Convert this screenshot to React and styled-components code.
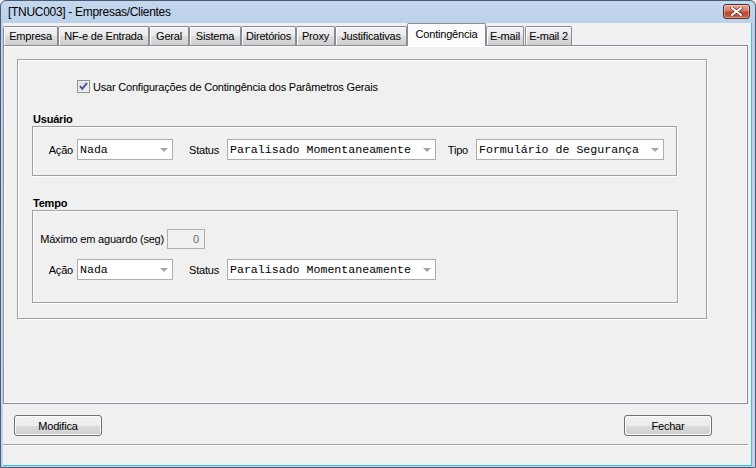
import React from 'react';
import styled, { createGlobalStyle } from 'styled-components';

const Global = createGlobalStyle`
  html, body {
    margin: 0;
    padding: 0;
    width: 756px;
    height: 468px;
    overflow: hidden;
    background: #f0f0f0;
  }
  body {
    font-family: "Liberation Sans", Arial, sans-serif;
    font-size: 11px;
    letter-spacing: -0.2px;
    color: #000;
  }
  * { box-sizing: border-box; }
`;

const Window = styled.div`
  width: 756px;
  height: 468px;
  display: flex;
  flex-direction: column;
  background: linear-gradient(#c3d7ed, #b9d0e9 30px, #c0d5ec);
  border: 1px solid #4a5d74;
  border-radius: 6px 6px 0 0;
  overflow: hidden;
`;

const TitleBar = styled.div`
  height: 22px;
  flex: none;
  display: flex;
  align-items: center;
  justify-content: space-between;
  padding: 0 5px 0 7px;
  font-size: 12px;
  letter-spacing: -0.3px;
  color: #000;
`;

const CloseButton = styled.div`
  width: 27px;
  height: 15px;
  margin-top: -1px;
  border: 1px solid #5a2a24;
  border-radius: 3px;
  background: linear-gradient(#e8a99c, #d27a68 45%, #c1442f 55%, #c9614c);
  display: flex;
  align-items: center;
  justify-content: center;
  box-shadow: inset 0 0 0 1px rgba(255, 255, 255, 0.35);
`;

const Client = styled.div`
  flex: 1;
  display: flex;
  flex-direction: column;
  margin: 0 3px 1px 2px;
  background: #f0f0f0;
  border-bottom: 1px solid #3fbfe8;
  border-right: 1px solid #3fbfe8;
`;

const TabStrip = styled.div`
  height: 22px;
  flex: none;
  display: flex;
  align-items: flex-end;
  position: relative;
  z-index: 1;
`;

const Tab = styled.div`
  width: ${(p) => p.$w}px;
  margin-left: ${(p) => p.$ml || 0}px;
  height: ${(p) => (p.$active ? 23 : 19)}px;
  margin-bottom: ${(p) => (p.$active ? -1 : 0)}px;
  display: flex;
  align-items: center;
  justify-content: center;
  padding-bottom: ${(p) => (p.$active ? 3 : 0)}px;
  border: 1px solid #898c95;
  border-bottom: none;
  border-radius: 2px 2px 0 0;
  background: ${(p) =>
    p.$active ? '#fcfcfc' : 'linear-gradient(#f2f2f2, #ebebeb 50%, #dddddd 51%, #cfcfcf)'};
  box-shadow: ${(p) => (p.$active ? 'none' : 'inset 1px 1px 0 #fff')};
  white-space: nowrap;
  font-size: 11px;
`;

const TabPanel = styled.div`
  height: 359px;
  flex: none;
  margin-right: 3px;
  border: 1px solid #898c95;
  background: #f0f0f0;
  box-shadow: inset 1px 1px 0 #fff, inset -1px -1px 0 #fff;
  padding: 13px 0 0 13px;
`;

const EtchedBox = styled.div`
  border: 1px solid #a0a0a0;
  box-shadow: inset 1px 1px 0 #fff, 1px 1px 0 #fff;
`;

const OuterBox = styled(EtchedBox)`
  width: 690px;
  height: 260px;
  padding: 20px 0 0 14px;
`;

const CheckRow = styled.label`
  display: flex;
  align-items: center;
  height: 13px;
  margin-left: 45px;
  gap: 3px;
`;

const SectionTitle = styled.div`
  font-weight: bold;
  height: 13px;
  line-height: 13px;
  margin-top: ${(p) => p.$mt}px;
  padding-left: 1px;
`;

const Section = styled(EtchedBox)`
  width: ${(p) => p.$w}px;
  height: ${(p) => p.$h}px;
  padding-top: ${(p) => p.$pt}px;
  display: flex;
  flex-direction: column;
  gap: 10px;
`;

const Row = styled.div`
  display: flex;
  align-items: center;
`;

const FieldLabel = styled.span`
  width: ${(p) => p.$w}px;
  margin-right: ${(p) => p.$gap}px;
  text-align: right;
  white-space: nowrap;
`;

const Combo = styled.div`
  width: ${(p) => p.$w}px;
  height: 21px;
  border: 1px solid #abadb3;
  background: #fff;
  display: flex;
  align-items: center;
  justify-content: space-between;
  padding: 0 4px 0 2px;
  font-family: "Liberation Mono", "Courier New", monospace;
  font-size: 11.6px;
  letter-spacing: 0;
  white-space: nowrap;
`;

const Arrow = styled.span`
  width: 0;
  height: 0;
  border-left: 4px solid transparent;
  border-right: 4px solid transparent;
  border-top: 4px solid #a6a6a6;
  margin-top: 1px;
`;

const NumInput = styled.div`
  width: 38px;
  height: 20px;
  border: 1px solid #afafaf;
  background: #f0f0f0;
  color: #6d6d6d;
  display: flex;
  align-items: center;
  justify-content: flex-end;
  padding-right: 5px;
`;

const Footer = styled.div`
  height: 40px;
  flex: none;
  display: flex;
  justify-content: space-between;
  align-items: flex-start;
  padding: 11px 39px 0 11px;
`;

const Button = styled.button`
  width: 88px;
  height: 21px;
  border: 1px solid #707070;
  border-radius: 3px;
  background: linear-gradient(#f2f2f2, #ebebeb 50%, #dddddd 51%, #cfcfcf);
  box-shadow: inset 0 0 0 1px #fcfcfc;
  font-family: "Liberation Sans", Arial, sans-serif;
  font-size: 11px;
  letter-spacing: -0.2px;
  color: #000;
  padding: 0;
`;

const StatusBar = styled.div`
  flex: 1;
  border-top: 1px solid #a0a0a0;
  box-shadow: inset 0 1px 0 #fff;
  margin-right: 3px;
`;

const tabs = [
  { label: 'Empresa', w: 55 },
  { label: 'NF-e de Entrada', w: 91 },
  { label: 'Geral', w: 40 },
  { label: 'Sistema', w: 52 },
  { label: 'Diretórios', w: 55 },
  { label: 'Proxy', w: 39 },
  { label: 'Justificativas', w: 72 },
  { label: 'Contingência', w: 79, active: true },
  { label: 'E-mail', w: 38 },
  { label: 'E-mail 2', w: 47, ml: 1 },
];

function CheckBox() {
  return (
    <svg width="13" height="13" viewBox="0 0 13 13">
      <defs>
        <linearGradient id="cbg" x1="0" y1="0" x2="1" y2="1">
          <stop offset="0" stopColor="#dcdcdc" />
          <stop offset="1" stopColor="#f6f6f6" />
        </linearGradient>
      </defs>
      <rect x="0.5" y="0.5" width="12" height="12" fill="#fff" stroke="#8e8f8f" />
      <rect x="2" y="2" width="9" height="9" fill="url(#cbg)" stroke="#c8cbd2" strokeWidth="0.5" />
      <path d="M3 6.2 L5.3 8.8 L10 3" fill="none" stroke="#3c4f8c" strokeWidth="1.8" />
    </svg>
  );
}

function Select({ w, value }) {
  return (
    <Combo $w={w}>
      <span>{value}</span>
      <Arrow />
    </Combo>
  );
}

export default function App() {
  return (
    <>
      <Global />
      <Window>
        <TitleBar>
          <span>[TNUC003] - Empresas/Clientes</span>
          <CloseButton>
            <svg width="13" height="9" viewBox="0 0 13 9">
              <path d="M2 1 L11 8 M11 1 L2 8" stroke="#5b2a22" strokeWidth="3.2" strokeLinecap="square" />
              <path d="M2 1 L11 8 M11 1 L2 8" stroke="#fff" strokeWidth="2" strokeLinecap="square" />
            </svg>
          </CloseButton>
        </TitleBar>
        <Client>
          <TabStrip>
            {tabs.map((t) => (
              <Tab key={t.label} $w={t.w} $ml={t.ml} $active={t.active}>
                {t.label}
              </Tab>
            ))}
          </TabStrip>
          <TabPanel>
            <OuterBox>
              <CheckRow>
                <CheckBox />
                <span>Usar Configurações de Contingência dos Parâmetros Gerais</span>
              </CheckRow>
              <SectionTitle $mt={20}>Usuário</SectionTitle>
              <Section $w={645} $h={50} $pt={12}>
                <Row>
                  <FieldLabel $w={40} $gap={4}>Ação</FieldLabel>
                  <Select w={96} value="Nada" />
                  <FieldLabel $w={46} $gap={8}>Status</FieldLabel>
                  <Select w={209} value="Paralisado Momentaneamente" />
                  <FieldLabel $w={32} $gap={8}>Tipo</FieldLabel>
                  <Select w={188} value="Formulário de Segurança" />
                </Row>
              </Section>
              <SectionTitle $mt={21}>Tempo</SectionTitle>
              <Section $w={646} $h={93} $pt={18}>
                <Row>
                  <FieldLabel $w={131} $gap={3}>Máximo em aguardo (seg)</FieldLabel>
                  <NumInput>0</NumInput>
                </Row>
                <Row>
                  <FieldLabel $w={40} $gap={4}>Ação</FieldLabel>
                  <Select w={96} value="Nada" />
                  <FieldLabel $w={46} $gap={8}>Status</FieldLabel>
                  <Select w={209} value="Paralisado Momentaneamente" />
                </Row>
              </Section>
            </OuterBox>
          </TabPanel>
          <Footer>
            <Button>Modifica</Button>
            <Button>Fechar</Button>
          </Footer>
          <StatusBar />
        </Client>
      </Window>
    </>
  );
}
